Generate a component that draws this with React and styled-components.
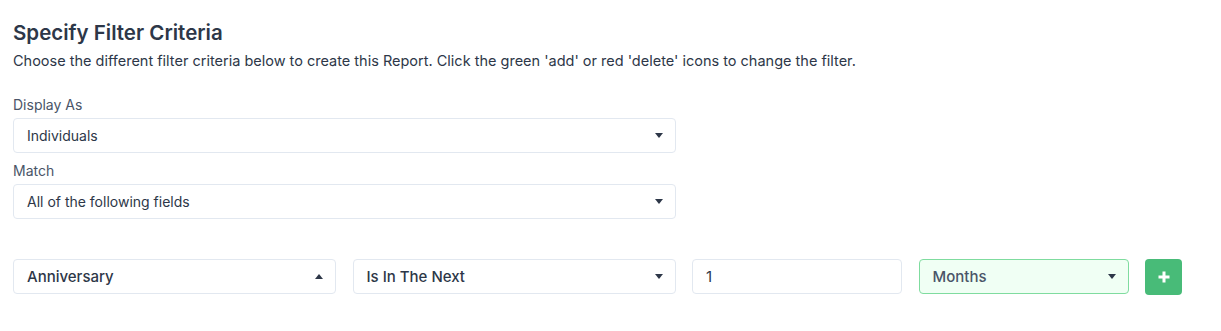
import styled, { createGlobalStyle } from 'styled-components';

const GlobalStyle = createGlobalStyle`
  body {
    margin: 0;
    background: #fff;
    font-family: Inter, "Noto Sans", sans-serif;
    color: #2d3748;
  }
`;

function Caret({ up }) {
  return (
    <CaretIcon viewBox="0 0 8 5" $up={up}>
      <path d="M0 0 L8 0 L4 5 Z" fill="currentColor" />
    </CaretIcon>
  );
}

function Select({ value, up, tone, size }) {
  return (
    <SelectBox $tone={tone} $size={size}>
      <SelectText $tone={tone} $size={size}>{value}</SelectText>
      <Caret up={up} />
    </SelectBox>
  );
}

function App() {
  return (
    <Page>
      <GlobalStyle />
      <Title>Specify Filter Criteria</Title>
      <Intro>
        Choose the different filter criteria below to create this Report. Click the green 'add' or red 'delete' icons to change the filter.
      </Intro>

      <Field>
        <Label>Display As</Label>
        <Select value="Individuals" />
      </Field>
      <Field>
        <Label>Match</Label>
        <Select value="All of the following fields" />
      </Field>

      <FilterRow>
        <Select value="Anniversary" up size="lg" />
        <Select value="Is In The Next" size="lg" />
        <NumberBox>1</NumberBox>
        <Select value="Months" tone="green" size="lg" />
        <AddButton aria-label="add">
          <svg viewBox="0 0 12 12" width="12" height="12">
            <path d="M6 0.5v11M0.5 6h11" stroke="#fff" strokeWidth="3" />
          </svg>
        </AddButton>
      </FilterRow>
    </Page>
  );
}

export default App;

//STYLED COMPONENTS
const Page = styled.div`
  padding: 20px 13px 0;
  width: 1221px;
  box-sizing: border-box;
`;

const Title = styled.h2`
  margin: 0;
  font-size: 20.5px;
  line-height: 26px;
  font-weight: 600;
  color: #2d3748;
`;

const Intro = styled.p`
  margin: 5px 0 24px;
  font-size: 14.5px;
  line-height: 20px;
  color: #2d3748;
`;

const Field = styled.div`
  width: 663px;
  & + & {
    margin-top: 8px;
  }
`;

const Label = styled.div`
  font-size: 14px;
  line-height: 20px;
  color: #4a5568;
  margin-bottom: 3px;
`;

const SelectBox = styled.div`
  box-sizing: border-box;
  height: 35px;
  display: flex;
  align-items: center;
  justify-content: space-between;
  padding: 0 12px 0 13px;
  border: 1px solid ${p => (p.$tone === 'green' ? '#7fdc9f' : '#e2e8f0')};
  background: ${p => (p.$tone === 'green' ? '#f0fff4' : '#fff')};
  border-radius: 4px;
`;

const SelectText = styled.span`
  font-size: ${p => (p.$size === 'lg' ? '15px' : '14px')};
  font-weight: ${p => (p.$size === 'lg' ? 500 : 400)};
  color: ${p => (p.$tone === 'green' ? '#4a5568' : '#2d3748')};
`;

const CaretIcon = styled.svg`
  width: 8px;
  height: 5px;
  color: #2d3748;
  transform: ${p => (p.$up ? 'rotate(180deg)' : 'none')};
`;

const FilterRow = styled.div`
  display: grid;
  grid-template-columns: 323px 323px 210px 210px 37px;
  column-gap: 16.5px;
  margin-top: 40px;
  align-items: start;
`;

const NumberBox = styled.div`
  box-sizing: border-box;
  height: 35px;
  display: flex;
  align-items: center;
  padding: 0 13px;
  border: 1px solid #e2e8f0;
  border-radius: 4px;
  font-size: 15px;
  color: #2d3748;
`;

const AddButton = styled.button`
  width: 37px;
  height: 36px;
  border: none;
  border-radius: 4px;
  background: #48bb78;
  display: flex;
  align-items: center;
  justify-content: center;
  padding: 0;
  cursor: pointer;
`;
